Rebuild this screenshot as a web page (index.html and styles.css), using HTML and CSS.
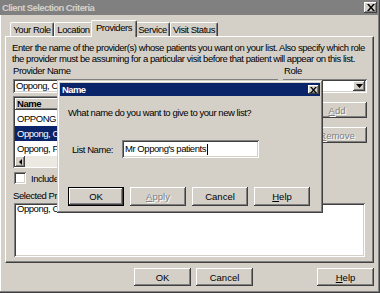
FILE: index.html
```html
<!DOCTYPE html>
<html lang="en">
<head>
    <meta charset="UTF-8">
    <meta name="viewport" content="width=device-width, initial-scale=1.0">
    <title>Client Selection Criteria</title>
    <link rel="stylesheet" href="styles.css">
</head>
<body>
    <div class="window">
        <div class="titlebar">
            <span class="title">Client Selection Criteria</span>
            <span class="close-btn">
                <svg width="8" height="7" viewBox="0 0 8 7"><path d="M0 0h2l2 2.4 2-2.4h2l-3 3.5 3 3.5h-2l-2-2.4-2 2.4h-2l3-3.5z" fill="#000"/></svg>
            </span>
        </div>

        <div class="tabs">
            <div class="tab t-role">Your Role</div>
            <div class="tab t-loc">Location</div>
            <div class="tab t-prov selected">Providers</div>
            <div class="tab t-serv">Service</div>
            <div class="tab t-visit">Visit Status</div>
        </div>

        <div class="panel">
            <p class="intro">Enter the name of the provider(s) whose patients you want on your list. Also specify which role<br>the provider must be assuming for a particular visit before that patient will appear on this list.</p>

            <div class="pick-grid">
                <div class="lbl">Provider Name</div>
                <div class="lbl">Role</div>
                <div class="field">Oppong, Christiana</div>
                <div class="combo">
                    <span class="drop-btn">
                        <svg width="7" height="4" viewBox="0 0 7 4"><path d="M0 0h7l-3.5 4z" fill="#000"/></svg>
                    </span>
                </div>
            </div>

            <div class="list-row">
                <div class="listview">
                    <div class="lv-head">Name</div>
                    <div class="lv-item">OPPONG KWAME</div>
                    <div class="lv-item selected">Oppong, Christiana</div>
                    <div class="lv-item">Oppong, F.</div>
                    <div class="hscroll">
                        <span class="scroll-btn">
                            <svg width="3" height="6" viewBox="0 0 3 6"><path d="M3 0v6l-3-3z" fill="#000"/></svg>
                        </span>
                    </div>
                </div>
                <div class="side-buttons">
                    <button class="btn" disabled><u>A</u>dd</button>
                    <button class="btn" disabled><u>R</u>emove</button>
                </div>
            </div>

            <div class="check-row">
                <span class="checkbox"></span>
                <span>Include -</span>
            </div>

            <div class="lbl sel-lbl">Selected Providers</div>
            <div class="selbox">Oppong, Christiana</div>
        </div>

        <div class="actions">
            <button class="btn">OK</button>
            <button class="btn">Cancel</button>
            <button class="btn help"><u>H</u>elp</button>
        </div>

        <div class="dialog">
            <div class="titlebar active">
                <span class="title">Name</span>
                <span class="close-btn small">
                    <svg width="7" height="6" viewBox="0 0 8 7"><path d="M0 0h2l2 2.4 2-2.4h2l-3 3.5 3 3.5h-2l-2-2.4-2 2.4h-2l3-3.5z" fill="#000"/></svg>
                </span>
            </div>
            <p class="question">What name do you want to give to your new list?</p>
            <div class="name-row">
                <span class="name-lbl">List Name:</span>
                <div class="field name-input">Mr Oppong's patients<span class="caret"></span></div>
            </div>
            <div class="dialog-buttons">
                <button class="btn default">OK</button>
                <button class="btn" disabled><u>A</u>pply</button>
                <button class="btn">Cancel</button>
                <button class="btn"><u>H</u>elp</button>
            </div>
        </div>
    </div>
</body>
</html>
```

FILE: styles.css
```css
* {
    box-sizing: border-box;
}
body {
    margin: 0;
    background: #d4d0c8;
    font-family: "Liberation Sans", Arial, sans-serif;
    font-size: 9.5px;
    letter-spacing: -0.45px;
    color: #000;
}
.window {
    position: relative;
    width: 380px;
    height: 293px;
    overflow: hidden;
    background: #d4d0c8;
    box-shadow: inset -1px -1px #404040, inset -2px -2px #808080, inset 1px 0 #fff;
}
.titlebar {
    display: flex;
    align-items: center;
    height: 15px;
    margin-right: 2px;
    padding-left: 2px;
    background: #808080;
}
.titlebar .title {
    flex: 1;
    color: #d4d0c8;
    font-weight: bold;
    font-size: 9.5px;
    letter-spacing: -0.6px;
}
.titlebar.active {
    height: 13px;
    margin: 0;
    background: #0a246a;
}
.titlebar.active .title {
    color: #fff;
}
.close-btn {
    display: flex;
    align-items: center;
    justify-content: center;
    width: 13px;
    height: 11px;
    margin-right: 1px;
    background: #d4d0c8;
    box-shadow: inset -1px -1px #404040, inset 1px 1px #fff, inset -2px -2px #808080;
}
.close-btn.small {
    width: 11px;
    height: 9px;
}

/* tabs */
.tabs {
    display: flex;
    align-items: flex-end;
    height: 16px;
    margin-top: 5px;
    padding-left: 10px;
}
.tab {
    height: 14px;
    line-height: 13px;
    text-align: center;
    border-top: 1px solid #fff;
    border-left: 1px solid #fff;
    border-right: 1px solid #404040;
    border-radius: 2px 2px 0 0;
    box-shadow: inset -1px 0 #808080;
}
.t-role { width: 44px; }
.t-loc { width: 39px; }
.t-serv { width: 35px; }
.t-visit { width: 48px; }
.tab.selected {
    position: relative;
    z-index: 1;
    width: 46px;
    height: 17px;
    margin: 0 -2px -1px;
    line-height: 14px;
    background: #d4d0c8;
}

/* panel */
.panel {
    width: 369px;
    height: 227px;
    margin-left: 5px;
    padding: 0 6px 0 7px;
    border: 1px solid;
    border-color: #fff #404040 #404040 #fff;
    box-shadow: inset -1px -1px #808080;
}
.intro {
    margin: 5px 0 0 -1px;
    line-height: 11px;
    white-space: nowrap;
}
.lbl {
    line-height: 11px;
}
.pick-grid {
    display: grid;
    grid-template-columns: 265px 84px;
    column-gap: 5px;
    row-gap: 3px;
    margin-top: 1px;
}
.pick-grid .lbl:nth-child(2) {
    padding-left: 1px;
}
.field {
    height: 14px;
    padding: 0 3px;
    line-height: 14px;
    background: #fff;
    white-space: nowrap;
    overflow: hidden;
    box-shadow: inset 1px 1px #808080, inset -1px -1px #fff, inset 2px 2px #404040, inset -2px -2px #d4d0c8;
}
.combo {
    display: flex;
    justify-content: flex-end;
    height: 14px;
    padding: 2px;
    background: #fff;
    box-shadow: inset 1px 1px #808080, inset -1px -1px #fff, inset 2px 2px #404040, inset -2px -2px #d4d0c8;
}
.drop-btn {
    display: flex;
    align-items: center;
    justify-content: center;
    width: 12px;
    background: #d4d0c8;
    box-shadow: inset -1px -1px #404040, inset 1px 1px #fff, inset -2px -2px #808080;
}
.list-row {
    display: flex;
    margin-top: 3px;
}
.listview {
    width: 287px;
    height: 72px;
    padding: 2px;
    background: #fff;
    box-shadow: inset 1px 1px #808080, inset -1px -1px #fff, inset 2px 2px #404040, inset -2px -2px #d4d0c8;
}
.lv-head {
    height: 12px;
    padding-left: 2px;
    line-height: 12px;
    font-weight: bold;
    background: #d4d0c8;
    box-shadow: inset -1px -1px #404040, inset 1px 1px #fff, inset -2px -2px #808080;
}
.lv-item {
    height: 15px;
    padding-left: 2px;
    line-height: 15px;
    white-space: nowrap;
}
.lv-item:nth-child(2) {
    margin-top: 1px;
}
.lv-item.selected {
    background: #0a246a;
    color: #fff;
}
.hscroll {
    display: flex;
    height: 11px;
    background: #ece9e2;
}
.scroll-btn {
    display: flex;
    align-items: center;
    justify-content: center;
    width: 10px;
    background: #d4d0c8;
    box-shadow: inset -1px -1px #404040, inset 1px 1px #fff, inset -2px -2px #808080;
}
.side-buttons {
    display: flex;
    flex-direction: column;
    gap: 9px;
    margin: 6px 0 0 18px;
}
.btn {
    height: 16px;
    width: 60px;
    padding: 0;
    border: none;
    background: #d4d0c8;
    font: inherit;
    color: #000;
    box-shadow: inset -1px -1px #404040, inset 1px 1px #fff, inset -2px -2px #808080;
}
.btn:disabled {
    color: #808080;
    text-shadow: 1px 1px #fff;
}
.check-row {
    display: flex;
    align-items: center;
    gap: 5px;
    height: 12px;
    margin: 4px 0 0 1px;
    white-space: nowrap;
}
.checkbox {
    width: 12px;
    height: 12px;
    background: #fff;
    box-shadow: inset 1px 1px #808080, inset -1px -1px #fff, inset 2px 2px #404040, inset -2px -2px #d4d0c8;
}
.sel-lbl {
    margin-top: 6px;
}
.selbox {
    width: 351px;
    height: 54px;
    margin: 2px 0 0 1px;
    padding: 1px 3px 0;
    line-height: 10px;
    background: #fff;
    box-shadow: inset 1px 1px #808080, inset -1px -1px #fff, inset 2px 2px #404040, inset -2px -2px #d4d0c8;
}

/* bottom buttons */
.actions {
    display: flex;
    gap: 5px;
    margin-top: 5px;
    padding: 0 6px 0 134px;
}
.actions .btn {
    width: 57px;
    height: 18px;
}
.actions .help {
    margin-left: auto;
}

/* Name dialog */
.dialog {
    position: absolute;
    left: 57px;
    top: 80px;
    width: 266px;
    height: 133px;
    padding: 3px;
    background: #d4d0c8;
    box-shadow: inset -1px -1px #404040, inset 1px 1px #d4d0c8, inset -2px -2px #808080, inset 2px 2px #fff;
}
.question {
    margin: 11px 0 0 8px;
    line-height: 11px;
}
.name-row {
    display: flex;
    align-items: center;
    margin: 22px 0 0 12px;
}
.name-lbl {
    width: 50px;
}
.name-input {
    width: 137px;
    height: 18px;
    line-height: 18px;
}
.caret {
    display: inline-block;
    width: 1px;
    height: 11px;
    margin-left: 1px;
    background: #000;
    vertical-align: middle;
}
.dialog-buttons {
    display: flex;
    gap: 6px;
    margin: 29px 0 0 8px;
}
.dialog-buttons .btn {
    width: 56px;
    height: 19px;
}
.dialog-buttons .default {
    border: 1px solid #000;
}
```
